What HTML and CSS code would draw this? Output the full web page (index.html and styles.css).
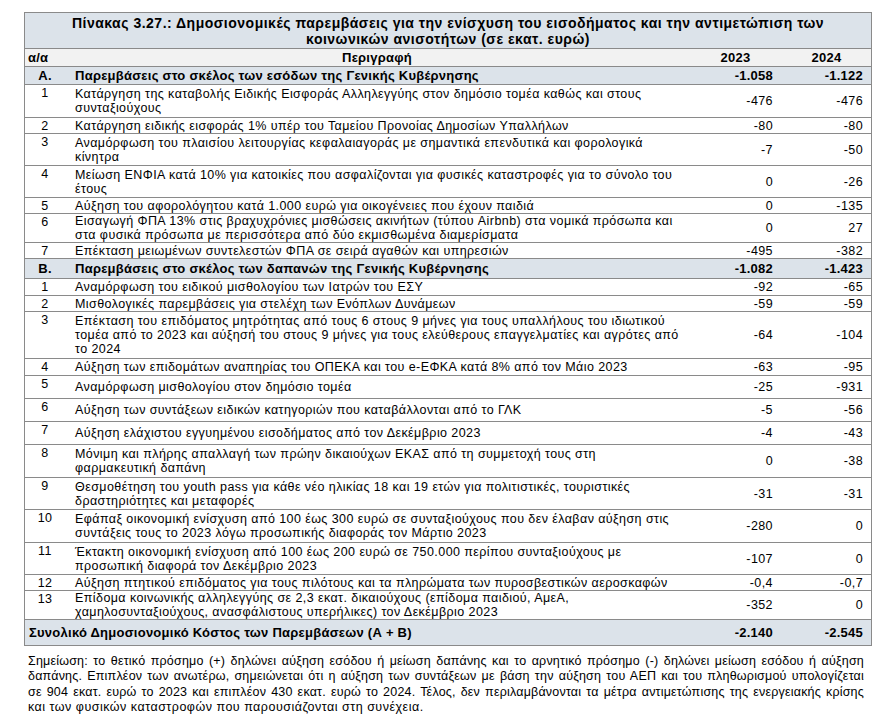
FILE: index.html
```html
<!DOCTYPE html>
<html lang="el">
<head>
<meta charset="utf-8">
<title>Πίνακας 3.27</title>
<link rel="stylesheet" href="styles.css">
</head>
<body>
<table class="fiscal">
  <colgroup>
    <col class="c-no"><col class="c-desc"><col class="c-y1"><col class="c-y2">
  </colgroup>
  <tbody>
    <tr class="h-title"><td class="title" colspan="4">Πίνακας 3.27.: Δημοσιονομικές παρεμβάσεις για την ενίσχυση του εισοδήματος και την αντιμετώπιση των<br>κοινωνικών ανισοτήτων (σε εκατ. ευρώ)</td></tr>
    <tr class="head h18"><td class="no no-head">α/α</td><td class="desc center">Περιγραφή</td><td class="num center">2023</td><td class="num center y2">2024</td></tr>
    <tr class="section h18"><td class="no">Α.</td><td class="desc">Παρεμβάσεις στο σκέλος των εσόδων της Γενικής Κυβέρνησης</td><td class="num">-1.058</td><td class="num y2">-1.122</td></tr>
    <tr class="h33"><td class="no">1</td><td class="desc">Κατάργηση της καταβολής Ειδικής Εισφοράς Αλληλεγγύης στον δημόσιο τομέα καθώς και στους<br>συνταξιούχους</td><td class="num">-476</td><td class="num y2">-476</td></tr>
    <tr class="h16"><td class="no">2</td><td class="desc">Κατάργηση ειδικής εισφοράς 1% υπέρ του Ταμείου Προνοίας Δημοσίων Υπαλλήλων</td><td class="num">-80</td><td class="num y2">-80</td></tr>
    <tr class="h32"><td class="no">3</td><td class="desc">Αναμόρφωση του πλαισίου λειτουργίας κεφαλαιαγοράς με σημαντικά επενδυτικά και φορολογικά<br>κίνητρα</td><td class="num">-7</td><td class="num y2">-50</td></tr>
    <tr class="h32"><td class="no">4</td><td class="desc">Μείωση ΕΝΦΙΑ κατά 10% για κατοικίες που ασφαλίζονται για φυσικές καταστροφές για το σύνολο του<br>έτους</td><td class="num">0</td><td class="num y2">-26</td></tr>
    <tr class="h16"><td class="no">5</td><td class="desc">Αύξηση του αφορολόγητου κατά 1.000 ευρώ για οικογένειες που έχουν παιδιά</td><td class="num">0</td><td class="num y2">-135</td></tr>
    <tr class="h29"><td class="no">6</td><td class="desc">Εισαγωγή ΦΠΑ 13% στις βραχυχρόνιες μισθώσεις ακινήτων (τύπου Airbnb) στα νομικά πρόσωπα και<br>στα φυσικά πρόσωπα με περισσότερα από δύο εκμισθωμένα διαμερίσματα</td><td class="num">0</td><td class="num y2">27</td></tr>
    <tr class="h16"><td class="no">7</td><td class="desc">Επέκταση μειωμένων συντελεστών ΦΠΑ σε σειρά αγαθών και υπηρεσιών</td><td class="num">-495</td><td class="num y2">-382</td></tr>
    <tr class="section h20"><td class="no">Β.</td><td class="desc">Παρεμβάσεις στο σκέλος των δαπανών της Γενικής Κυβέρνησης</td><td class="num">-1.082</td><td class="num y2">-1.423</td></tr>
    <tr class="h17"><td class="no">1</td><td class="desc">Αναμόρφωση του ειδικού μισθολογίου των Ιατρών του ΕΣΥ</td><td class="num">-92</td><td class="num y2">-65</td></tr>
    <tr class="h16"><td class="no">2</td><td class="desc">Μισθολογικές παρεμβάσεις για στελέχη των Ενόπλων Δυνάμεων</td><td class="num">-59</td><td class="num y2">-59</td></tr>
    <tr class="h47"><td class="no">3</td><td class="desc">Επέκταση του επιδόματος μητρότητας από τους 6 στους 9 μήνες για τους υπαλλήλους του ιδιωτικού<br>τομέα από το 2023 και αύξησή του στους 9 μήνες για τους ελεύθερους επαγγελματίες και αγρότες από<br>το 2024</td><td class="num">-64</td><td class="num y2">-104</td></tr>
    <tr class="h17"><td class="no">4</td><td class="desc">Αύξηση των επιδομάτων αναπηρίας του ΟΠΕΚΑ και του e-ΕΦΚΑ κατά 8% από τον Μάιο 2023</td><td class="num">-63</td><td class="num y2">-95</td></tr>
    <tr class="h23"><td class="no">5</td><td class="desc">Αναμόρφωση μισθολογίου στον δημόσιο τομέα</td><td class="num">-25</td><td class="num y2">-931</td></tr>
    <tr class="h23"><td class="no">6</td><td class="desc">Αύξηση των συντάξεων ειδικών κατηγοριών που καταβάλλονται από το ΓΛΚ</td><td class="num">-5</td><td class="num y2">-56</td></tr>
    <tr class="h23"><td class="no">7</td><td class="desc">Αύξηση ελάχιστου εγγυημένου εισοδήματος από τον Δεκέμβριο 2023</td><td class="num">-4</td><td class="num y2">-43</td></tr>
    <tr class="h33"><td class="no">8</td><td class="desc">Μόνιμη και πλήρης απαλλαγή των πρώην δικαιούχων ΕΚΑΣ από τη συμμετοχή τους στη<br>φαρμακευτική δαπάνη</td><td class="num">0</td><td class="num y2">-38</td></tr>
    <tr class="h32"><td class="no">9</td><td class="desc">Θεσμοθέτηση του youth pass για κάθε νέο ηλικίας 18 και 19 ετών για πολιτιστικές, τουριστικές<br>δραστηριότητες και μεταφορές</td><td class="num">-31</td><td class="num y2">-31</td></tr>
    <tr class="h33"><td class="no">10</td><td class="desc">Εφάπαξ οικονομική ενίσχυση από 100 έως 300 ευρώ σε συνταξιούχους που δεν έλαβαν αύξηση στις<br>συντάξεις τους το 2023 λόγω προσωπικής διαφοράς τον Μάρτιο 2023</td><td class="num">-280</td><td class="num y2">0</td></tr>
    <tr class="h32"><td class="no">11</td><td class="desc">Έκτακτη οικονομική ενίσχυση από 100 έως 200 ευρώ σε 750.000 περίπου συνταξιούχους με<br>προσωπική διαφορά τον Δεκέμβριο 2023</td><td class="num">-107</td><td class="num y2">0</td></tr>
    <tr class="h16"><td class="no">12</td><td class="desc">Αύξηση πτητικού επιδόματος για τους πιλότους και τα πληρώματα των πυροσβεστικών αεροσκαφών</td><td class="num">-0,4</td><td class="num y2">-0,7</td></tr>
    <tr class="h28"><td class="no">13</td><td class="desc">Επίδομα κοινωνικής αλληλεγγύης σε 2,3 εκατ. δικαιούχους (επίδομα παιδιού, ΑμεΑ,<br>χαμηλοσυνταξιούχους, ανασφάλιστους υπερήλικες) τον Δεκέμβριο 2023</td><td class="num">-352</td><td class="num y2">0</td></tr>
    <tr class="section total h26"><td class="total-label" colspan="2">Συνολικό Δημοσιονομικό Κόστος των Παρεμβάσεων (Α + Β)</td><td class="num">-2.140</td><td class="num y2">-2.545</td></tr>
  </tbody>
</table>
<div class="note">
  <p class="line">Σημείωση: το θετικό πρόσημο (+) δηλώνει αύξηση εσόδου ή μείωση δαπάνης και το αρνητικό πρόσημο (-) δηλώνει μείωση εσόδου ή αύξηση</p>
  <p class="line">δαπάνης. Επιπλέον των ανωτέρω, σημειώνεται ότι η αύξηση των συντάξεων με βάση την αύξηση του ΑΕΠ και του πληθωρισμού υπολογίζεται</p>
  <p class="line">σε 904 εκατ. ευρώ το 2023 και επιπλέον 430 εκατ. ευρώ το 2024. Τέλος, δεν περιλαμβάνονται τα μέτρα αντιμετώπισης της ενεργειακής κρίσης</p>
  <p class="line last">και των φυσικών καταστροφών που παρουσιάζονται στη συνέχεια.</p>
</div>
</body>
</html>
```
FILE: styles.css
```css
* { box-sizing: border-box; }
html, body { background: #ffffff; }
body {
  margin: 12px 14px 0 24px;
  font-family: "Liberation Sans", Arial, sans-serif;
  font-size: 12.5px;
  color: #000;
}
.fiscal {
  width: 848px;
  table-layout: fixed;
  border-collapse: separate;
  border-spacing: 0;
  border: 1px solid #8a8a8a;
}
.c-no { width: 40px; }
.c-desc { width: 624px; }
.c-y1 { width: 93px; }
.c-y2 { width: 89px; }
.fiscal td {
  padding: 0;
  font-size: 12.5px;
  line-height: 14px;
  letter-spacing: 0.42px;
  border-top: 1px solid #8a8a8a;
  vertical-align: middle;
  white-space: nowrap;
}
.fiscal tr:first-child td { border-top: none; }
.title {
  background: #dce3ea;
  font-weight: bold;
  font-size: 14px !important;
  letter-spacing: 0.5px !important;
  line-height: 16px !important;
  text-align: center;
  height: 35px;
}
.head td { background: #f2f2f2; font-weight: bold; font-size: 13px; letter-spacing: 0.25px; }
.section td { background: #dce3ea; font-weight: bold; font-size: 13px; letter-spacing: 0.25px; }
.fiscal td.no { text-align: center; vertical-align: top; padding-top: 1px; }
.section td.no { vertical-align: middle; padding-top: 0; }
.head td.no-head { text-align: left; padding-left: 3px; vertical-align: middle; padding-top: 0; }
.desc { padding-left: 10px !important; }
.desc.center { padding-left: 0 !important; text-align: center; }
.num { text-align: right; padding-right: 9px !important; }
.num.y2 { padding-right: 8px !important; }
.num.center { text-align: center; padding-right: 0 !important; }
.total-label { padding-left: 4px !important; }

.h16 { height: 16px; }
.h17 { height: 17px; }
.h18 { height: 18px; }
.h20 { height: 20px; }
.h23 { height: 23px; }
.h26 { height: 26px; }
.h28 { height: 28px; }
.h29 { height: 29px; }
.h32 { height: 32px; }
.h33 { height: 33px; }
.h47 { height: 47px; }

.note {
  width: 836px;
  margin: 8px 0 0 4px;
  font-size: 12.5px;
  line-height: 15.3px;
}
.note .line {
  margin: 0;
  letter-spacing: 0.2px;
  text-align: justify;
  text-align-last: justify;
  white-space: nowrap;
}
.note .line.last { text-align-last: left; letter-spacing: 0.5px; }
```
